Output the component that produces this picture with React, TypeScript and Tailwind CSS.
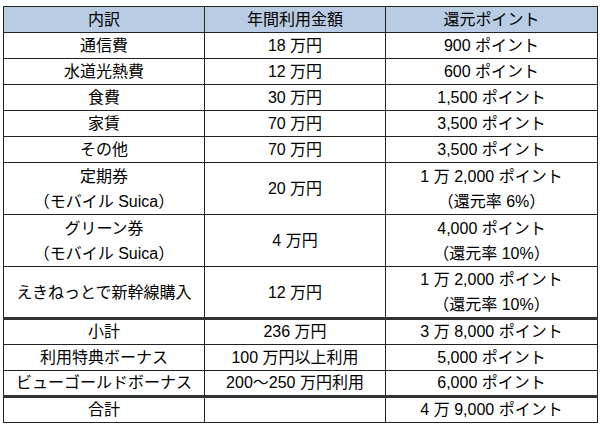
import React from 'react';

type Row = {
  item: React.ReactNode;
  amount: string;
  points: React.ReactNode;
  tall?: boolean;
  doubleTop?: boolean;
};

const rows: Row[] = [
  { item: '通信費', amount: '18 万円', points: '900 ポイント' },
  { item: '水道光熱費', amount: '12 万円', points: '600 ポイント' },
  { item: '食費', amount: '30 万円', points: '1,500 ポイント' },
  { item: '家賃', amount: '70 万円', points: '3,500 ポイント' },
  { item: 'その他', amount: '70 万円', points: '3,500 ポイント' },
  {
    item: (
      <>
        定期券
        <br />
        （モバイル Suica）
      </>
    ),
    amount: '20 万円',
    points: (
      <>
        1 万 2,000 ポイント
        <br />
        （還元率 6%）
      </>
    ),
    tall: true,
  },
  {
    item: (
      <>
        グリーン券
        <br />
        （モバイル Suica）
      </>
    ),
    amount: '4 万円',
    points: (
      <>
        4,000 ポイント
        <br />
        （還元率 10%）
      </>
    ),
    tall: true,
  },
  {
    item: 'えきねっとで新幹線購入',
    amount: '12 万円',
    points: (
      <>
        1 万 2,000 ポイント
        <br />
        （還元率 10%）
      </>
    ),
    tall: true,
  },
  { item: '小計', amount: '236 万円', points: '3 万 8,000 ポイント', doubleTop: true },
  { item: '利用特典ボーナス', amount: '100 万円以上利用', points: '5,000 ポイント' },
  { item: 'ビューゴールドボーナス', amount: '200～250 万円利用', points: '6,000 ポイント' },
  { item: '合計', amount: '', points: '4 万 9,000 ポイント', doubleTop: true },
];

const App = () => {
  return (
    <div className="w-[600px] h-[431px] bg-white pt-[6px] pl-[3px] font-['Liberation_Sans','Noto_Sans_CJK_JP',sans-serif] text-[16px] text-black">
      <table className="w-[594px] border-collapse table-fixed text-center">
        <colgroup>
          <col className="w-[201px]" />
          <col className="w-[181px]" />
          <col className="w-[212px]" />
        </colgroup>
        <thead>
          <tr className="h-[26px] bg-[#b8cce4]">
            <th className="border border-[#222] font-normal leading-[24px]">内訳</th>
            <th className="border border-[#222] font-normal leading-[24px]">年間利用金額</th>
            <th className="border border-[#222] font-normal leading-[24px]">還元ポイント</th>
          </tr>
        </thead>
        <tbody>
          {rows.map((row, i) => {
            const lead = row.tall ? 'leading-[25px]' : 'leading-[24px]';
            const cell = row.doubleTop
              ? `border border-[#222] border-t-[3px] border-t-double border-t-[#333] p-0 ${lead}`
              : `border border-[#222] p-0 ${lead}`;
            return (
              <tr key={i} className={row.tall ? 'h-[52px]' : 'h-[26px]'}>
                <td className={cell}>{row.item}</td>
                <td className={cell}>{row.amount}</td>
                <td className={cell}>{row.points}</td>
              </tr>
            );
          })}
        </tbody>
      </table>
    </div>
  );
};

export default App;
